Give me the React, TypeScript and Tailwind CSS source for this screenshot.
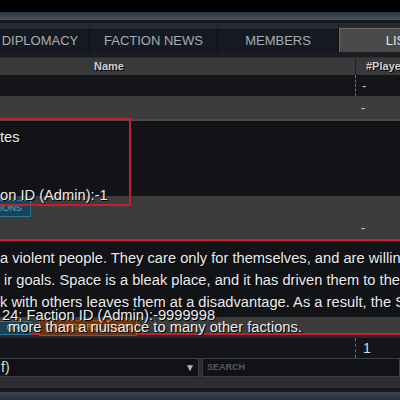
const shadow = "[text-shadow:1px_1px_0_#000]";

function Tabs() {
  return (
    <div className="h-[24px] shrink-0 flex bg-[#0b0d12] text-[13px] text-[#a9adb3] uppercase">
      <div className="w-[98px] ml-[-9px] shrink-0 flex items-center justify-center bg-[#151922] border-t border-[#232833]">
        DIPLOMACY
      </div>
      <div className="w-[1px] shrink-0" />
      <div className="w-[127px] shrink-0 flex items-center justify-center bg-[#151922] border-t border-[#232833]">
        FACTION NEWS
      </div>
      <div className="w-[1px] shrink-0" />
      <div className="w-[120px] shrink-0 flex items-center justify-center bg-[#151922] border-t border-[#232833]">
        MEMBERS
      </div>
      <div className="w-[1px] shrink-0" />
      <div className="w-[120px] shrink-0 flex items-center justify-center bg-[#4a4a4a] border-t border-l border-[#6e6e6e] text-[#e2e2e2]">
        LIST
      </div>
    </div>
  );
}

function Row({ value }: { value: string }) {
  return (
    <div className="h-[21px] shrink-0 flex bg-[#13151b]">
      <div className="w-[355px] shrink-0" />
      <div className="flex items-center pl-[6px] border-l border-dashed border-[#6d6d6d] text-[13px] text-[#cfcfcf]">
        {value}
      </div>
    </div>
  );
}

export default function App() {
  return (
    <div className="w-[400px] h-[400px] overflow-hidden bg-black font-['Liberation_Sans',sans-serif] text-[14.7px] text-[#ececec] flex flex-col">
      <div className="h-[12px] shrink-0 bg-black" />
      <div className="h-[8px] shrink-0 bg-gradient-to-b from-[#2b343f] to-[#4a5662]" />
      <div className="h-[3px] shrink-0 bg-[#16191e]" />
      <div className="h-[5px] shrink-0 bg-[#26292e]" />
      <Tabs />
      <div className="h-[5px] shrink-0 bg-[#1b1d22]" />

      {/* header */}
      <div className="h-[18px] shrink-0 flex bg-[#393939] border-t border-[#2c2c2c] text-[11px] font-bold text-[#d0d0d0]">
        <div className={`w-[355px] shrink-0 flex items-center pl-[94px] ${shadow}`}>Name</div>
        <div className={`flex items-center pl-[10px] border-l border-[#222] whitespace-nowrap ${shadow}`}>#Players</div>
      </div>

      <Row value="-" />

      {/* selected faction row */}
      <div className="relative h-[143px] shrink-0 flex flex-col bg-[#3c3c3c]">
        <div className="h-[23px] shrink-0 flex items-center pl-[361px] text-[13px] text-[#cfcfcf]">-</div>
        <div className="h-[2px] shrink-0 bg-[#4a4a4a]" />
        <div className="h-[75px] shrink-0 bg-[#121317]" />
        <div className="flex-1 flex items-start pt-[22px] pl-[361px] text-[13px] text-[#cfcfcf]">-</div>

        <div className="absolute left-[-40px] top-[104px] w-[71px] h-[17px] flex items-center justify-end pr-[8px] bg-[#1b4354] border border-[#2b7896] text-[9px] text-[#58a8c4]">
          IONS
        </div>
        <div className="absolute left-[-2px] top-[22px] w-[133px] h-[88px] border-2 border-[#c41f2e]" />
        <div className={`absolute left-0 top-[32px] leading-[18px] whitespace-nowrap ${shadow}`}>tes</div>
        <div className={`absolute left-0 top-[90px] leading-[18px] whitespace-nowrap ${shadow}`}>on ID (Admin):-1</div>
      </div>

      {/* description */}
      <div className="relative h-[96px] shrink-0 flex flex-col bg-[#3c3c3c]">
        <div className="h-[2px] shrink-0 bg-[#c41f2e]" />
        <div className="h-[1px] shrink-0 bg-[#2a2a2a]" />
        <div className="h-[75px] shrink-0 bg-[#121317]" />
        <div className="flex-1" />
        <div className="h-[2px] shrink-0 bg-[#c41f2e]" />

        <div className="absolute left-[-40px] top-[82px] w-[71px] h-[14px] flex items-center justify-end pr-[4px] bg-[#1b4354] border border-[#2b7896] text-[9px] text-[#58a8c4]">
          ONS
        </div>
        <div className="absolute left-[39px] top-[81px] w-[98px] h-[16px] flex items-center justify-center bg-[#6b3412] border border-[#a64a14] text-[9px] text-[#d9832e]">
          CHANGE RELATION
        </div>

        <div className={`absolute left-0 top-[10px] leading-[18px] whitespace-nowrap ${shadow}`}>
          a violent people. They care only for themselves, and are willing to
        </div>
        <div className={`absolute left-[4px] top-[32px] leading-[18px] whitespace-nowrap ${shadow}`}>
          ir goals. Space is a bleak place, and it has driven them to the edge
        </div>
        <div className={`absolute left-0 top-[54px] leading-[18px] whitespace-nowrap ${shadow}`}>
          k with others leaves them at a disadvantage. As a result, the Scavengers
        </div>
        <div className={`absolute left-[2px] top-[67px] leading-[18px] whitespace-nowrap ${shadow}`}>
          24; Faction ID (Admin):-9999998
        </div>
        <div className={`absolute left-[8px] top-[79px] leading-[18px] whitespace-nowrap ${shadow}`}>
          more than a nuisance to many other factions.
        </div>
      </div>

      <div className="h-[3px] shrink-0 bg-[#25272b]" />
      <div className="h-[20px] shrink-0 flex bg-[#13151b]">
        <div className="w-[355px] shrink-0" />
        <div className="flex items-center pl-[7px] border-l border-dashed border-[#6d6d6d] text-[14px] text-[#dcdcdc]">1</div>
      </div>

      {/* filter inputs */}
      <div className="h-[19px] shrink-0 flex bg-[#2a2c30]">
        <div className="w-[201px] ml-[-2px] shrink-0 flex items-center justify-between pr-[3px] bg-[#101216] border border-[#3b3e44]">
          <span className="pl-[2px] text-[14px] text-[#dcdcdc]">f)</span>
          <span className="text-[10px] text-[#b4b4b4]">▼</span>
        </div>
        <div className="flex-1 ml-[3px] flex items-center pl-[4px] bg-[#101216] border border-[#3b3e44] text-[9px] font-bold text-[#565a60]">
          SEARCH
        </div>
      </div>
      <div className="h-[11px] shrink-0 bg-[#2b2d31]" />
      <div className="h-[4px] shrink-0 bg-[#17191d]" />
      <div className="flex-1 bg-gradient-to-b from-[#3a4550] to-[#2a333d]" />
    </div>
  );
}
